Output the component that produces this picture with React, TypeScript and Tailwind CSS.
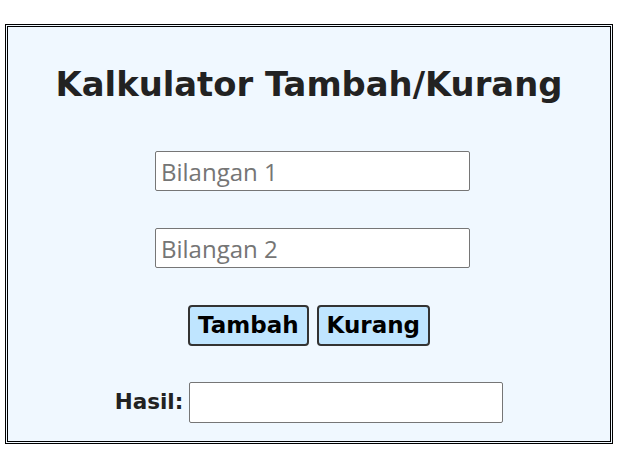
export default function App() {
  const field =
    'ml-[7px] h-[40px] w-[315px] rounded-[2px] border border-[#767676] bg-white px-[5px] text-[24px] text-black outline-none placeholder:text-[#757575]'
  const btn =
    'h-[41px] rounded-[4px] border-2 border-[#333] bg-[#bfe5ff] px-[8px] text-[23px] font-bold leading-none text-black'

  return (
    <div className="h-[455px] w-[622px] bg-white pl-[5px] pt-[24px]">
      <div
        className="flex h-[420px] w-[608px] flex-col items-center border-[3px] border-double border-black bg-[#f0f8ff] pt-[38px] text-[#222]"
        style={{ fontFamily: '"DejaVu Sans", Verdana, sans-serif' }}
      >
        <h1 className="text-[33.8px] font-bold leading-[40px]">Kalkulator Tambah/Kurang</h1>

        <input
          placeholder="Bilangan 1"
          className={`mt-[46px] ${field}`}
          style={{ fontFamily: '"Open Sans", sans-serif' }}
        />
        <input
          placeholder="Bilangan 2"
          className={`mt-[37px] ${field}`}
          style={{ fontFamily: '"Open Sans", sans-serif' }}
        />

        <div className="mt-[37px] flex gap-[8px]">
          <button className={btn} style={{ fontFamily: '"DejaVu Sans", sans-serif' }}>
            Tambah
          </button>
          <button className={btn} style={{ fontFamily: '"DejaVu Sans", sans-serif' }}>
            Kurang
          </button>
        </div>

        <div className="mt-[36px] flex items-center gap-[6px]">
          <label className="text-[21.5px] font-bold">Hasil:</label>
          <input
            readOnly
            className="h-[41px] w-[314px] rounded-[2px] border border-[#767676] bg-white px-[5px] text-[22px] outline-none"
          />
        </div>
      </div>
    </div>
  )
}
